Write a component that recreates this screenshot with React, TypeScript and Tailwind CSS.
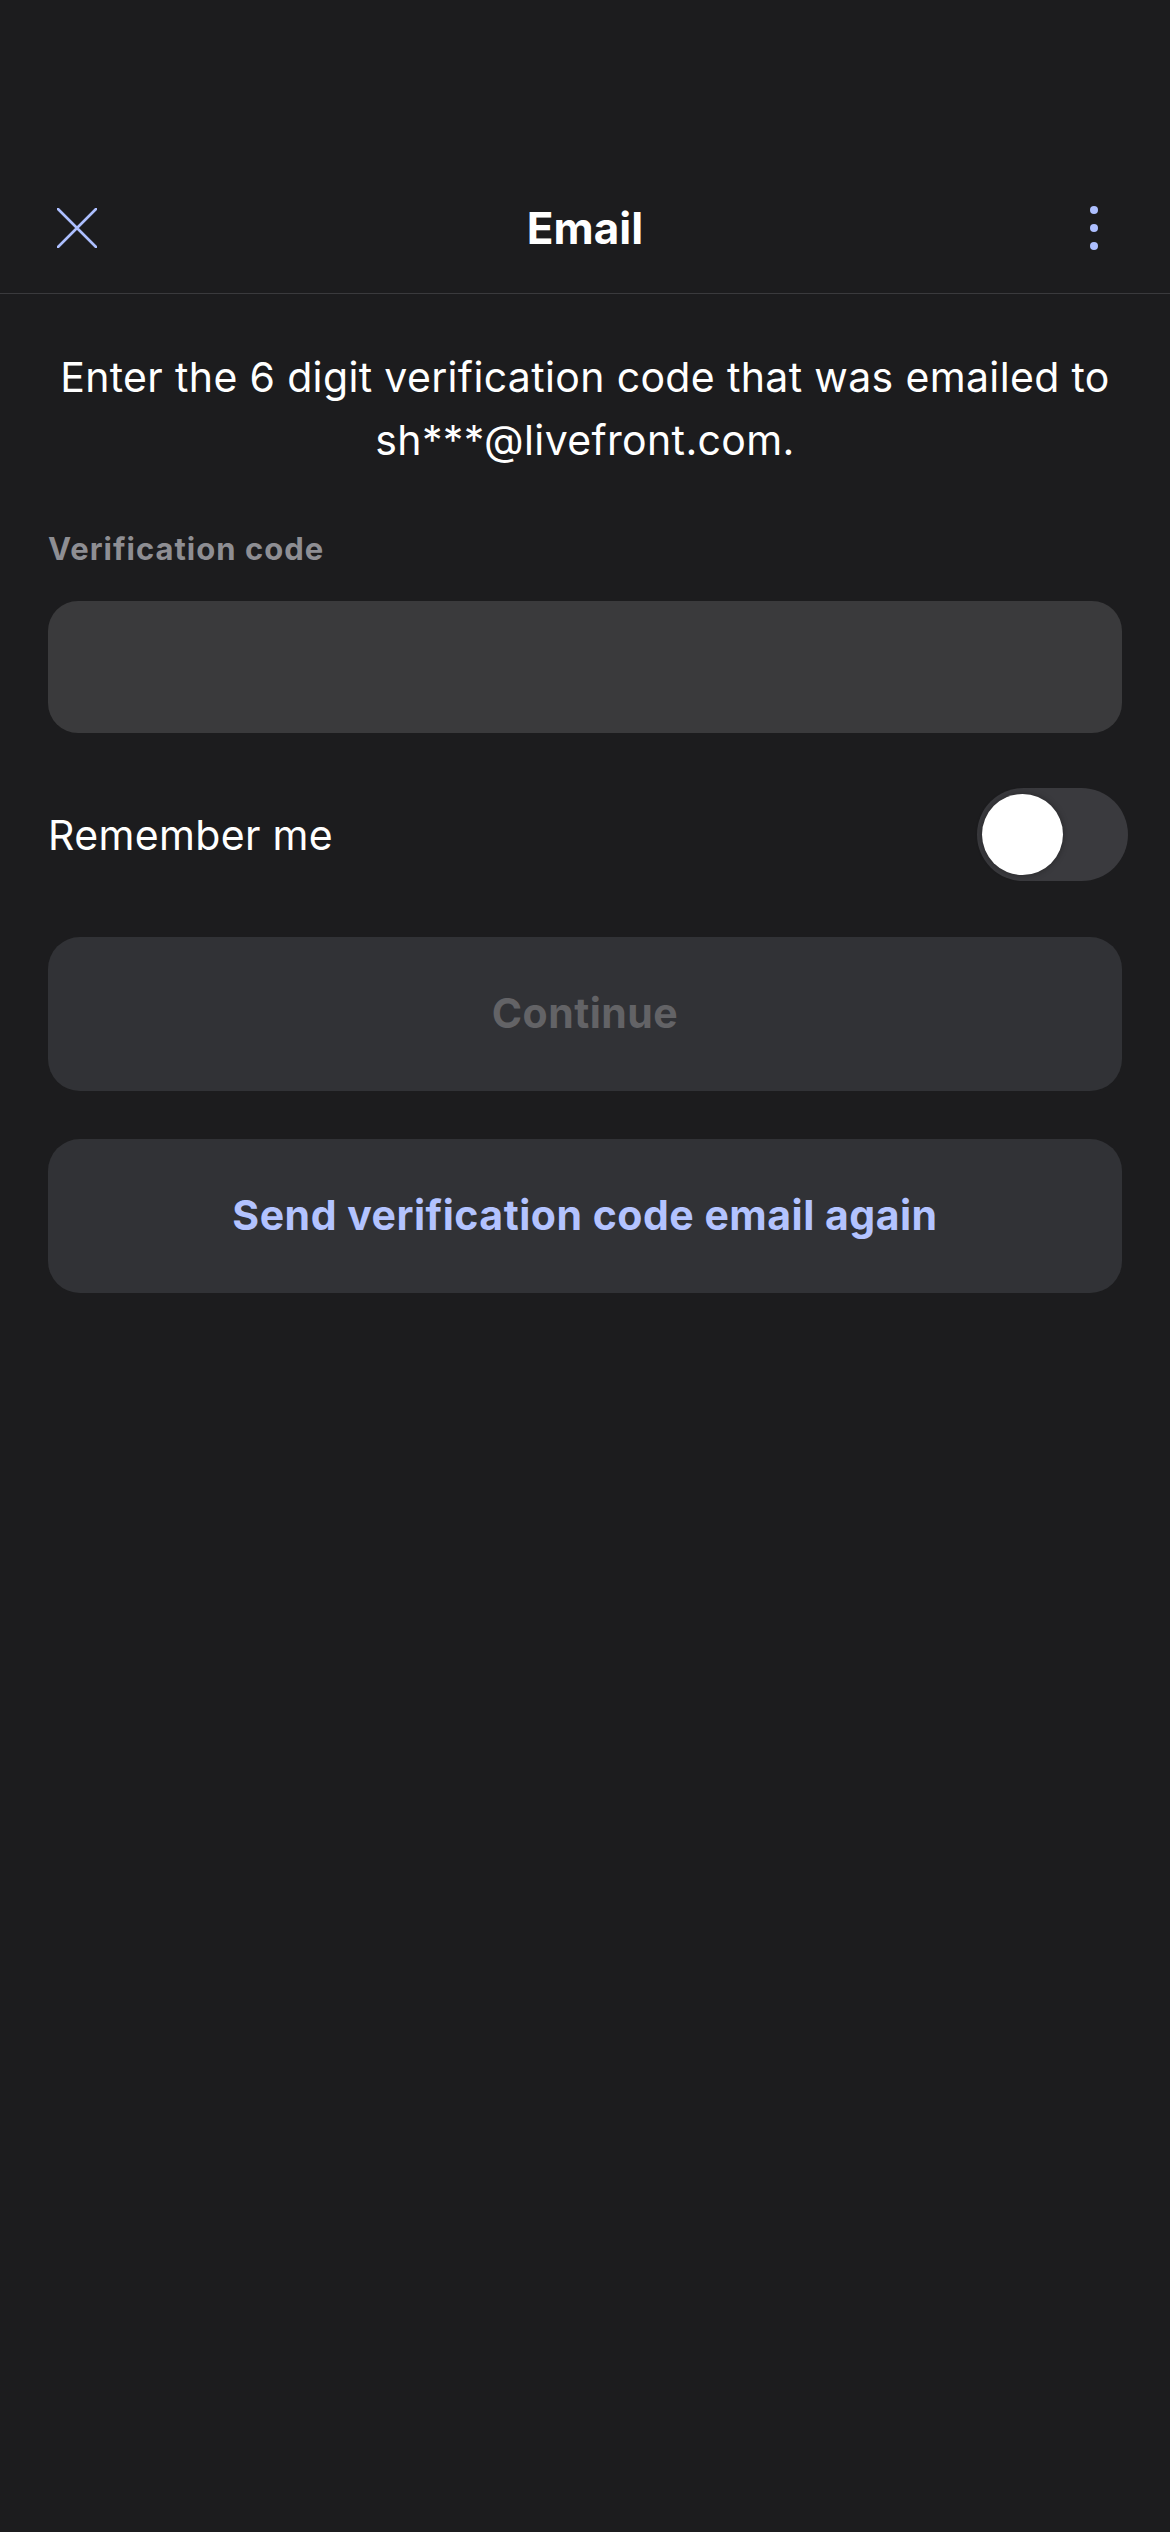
export default function App() {
  const font = { fontFamily: '"Inter", "Roboto", sans-serif' };
  return (
    <div className="min-h-[2532px] w-full bg-[#1c1c1e] text-white" style={font}>
      <div className="h-[162px]" />
      <header className="relative flex h-[132px] items-center justify-between border-b border-[#3a3a3d] px-[57px]">
        <svg width="40" height="40" viewBox="0 0 40 40" className="shrink-0">
          <path d="M1 1 L39 39 M39 1 L1 39" stroke="#adbfff" strokeWidth="2.6" strokeLinecap="round" />
        </svg>
        <h1 className="absolute left-0 right-0 text-center text-[44px] font-bold">Email</h1>
        <div className="mr-[15px] flex flex-col items-center gap-[10px]">
          <span className="h-[8px] w-[8px] rounded-full bg-[#adbfff]" />
          <span className="h-[8px] w-[8px] rounded-full bg-[#adbfff]" />
          <span className="h-[8px] w-[8px] rounded-full bg-[#adbfff]" />
        </div>
      </header>

      <main className="px-[48px] pt-[52px]">
        <p className="text-center text-[41px] leading-[63px] tracking-[0.35px]">
          Enter the 6 digit verification code that was emailed to sh***@livefront.com.
        </p>

        <label className="mt-[59px] block text-[31px] font-bold leading-[36px] tracking-[1px] text-[#8e8e93]">
          Verification code
        </label>
        <div className="mt-[34px] h-[132px] w-full rounded-[30px] bg-[#3a3a3c]" />

        <div className="mt-[55px] flex items-center justify-between">
          <span className="text-[41px] leading-[48px] tracking-[0.35px]">Remember me</span>
          <div className="-mr-[6px] flex h-[93px] w-[151px] items-center rounded-full bg-[#3a3a3e] pl-[5px]">
            <div className="h-[81px] w-[81px] rounded-full bg-white shadow-[0_0_6px_rgba(0,0,0,0.35)]" />
          </div>
        </div>

        <button className="mt-[56px] flex h-[154px] w-full items-center justify-center rounded-[32px] bg-[#313236] text-[41px] font-bold tracking-[0.5px] text-[#636366]">
          Continue
        </button>
        <button className="mt-[48px] flex h-[154px] w-full items-center justify-center rounded-[32px] bg-[#313236] text-[41px] font-bold tracking-[0.5px] text-[#b3c3ff]">
          Send verification code email again
        </button>
      </main>
    </div>
  );
}
